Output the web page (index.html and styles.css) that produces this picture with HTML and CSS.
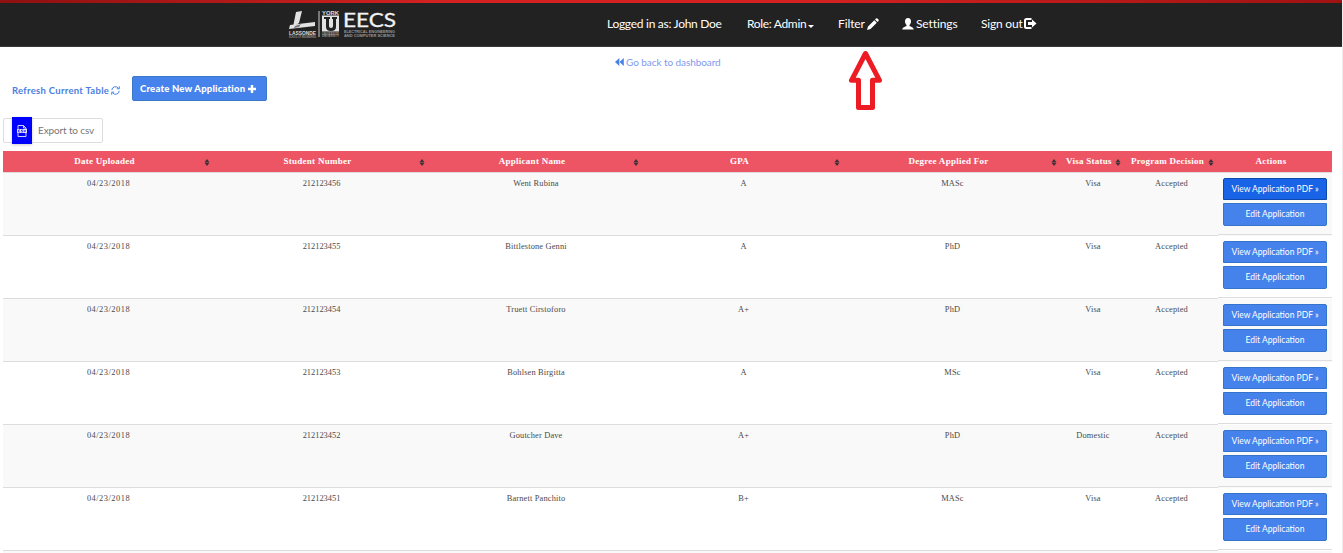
FILE: index.html
```html
<!DOCTYPE html>
<html lang="en">
<head>
<meta charset="utf-8">
<title>Applications</title>
<link rel="stylesheet" href="styles.css">
</head>
<body>
<svg class="defs" width="0" height="0">
  <symbol id="sort" viewBox="0 0 6 7"><path d="M3 0L5.500 3.200H.5zM3 7L5.500 3.800H.5z"/></symbol>
</svg>
<header class="navbar">
  <svg class="logo" width="112" height="32" viewBox="0 0 112 32">
    <path class="l-light" d="M8 3l6-1-3 12-6 4z"/>
    <path class="l-light" d="M2 16l25-3v4L1 20z"/>
    <path class="l-dim" d="M7 17l6-2-2 3-5 1z"/>
    <text class="l-text" x="1" y="26" font-size="6" textLength="27" lengthAdjust="spacingAndGlyphs">LASSONDE</text>
    <text class="l-text l-soft" x="1" y="28.500" font-size="2.6" textLength="27" lengthAdjust="spacingAndGlyphs">SCHOOL OF ENGINEERING</text>
    <rect class="l-dim" x="30" y="2" width="2" height="26"/>
    <text class="l-text" x="34" y="6" font-size="5" textLength="17" lengthAdjust="spacingAndGlyphs">YORK</text>
    <rect class="l-light" x="34" y="6.500" width="17" height="16"/>
    <path class="l-dark" d="M36 8h6v2h-1v7q0 2 2 2t2-2v-7h-1V8h5v2h-1v8q0 4-5 4t-5-4v-8h-2z"/>
    <text class="l-text l-soft" x="34" y="25.500" font-size="3.200" textLength="17" lengthAdjust="spacingAndGlyphs">UNIVERSITÉ</text>
    <text class="l-text l-soft" x="34" y="28.300" font-size="3.200" textLength="17" lengthAdjust="spacingAndGlyphs">UNIVERSITY</text>
    <text class="l-name" x="55" y="18" font-size="20" textLength="53" lengthAdjust="spacingAndGlyphs">EECS</text>
    <text class="l-text l-soft" x="56" y="23.500" font-size="3.800" textLength="51" lengthAdjust="spacingAndGlyphs">ELECTRICAL ENGINEERING</text>
    <text class="l-text l-soft" x="56" y="27.800" font-size="3.800" textLength="51" lengthAdjust="spacingAndGlyphs">AND COMPUTER SCIENCE</text>
  </svg>
  <nav class="menu">
    <a class="user">Logged in as: John Doe</a>
    <a class="role">Role: Admin<i class="caret"></i></a>
    <a class="filter">Filter<svg width="12" height="12" viewBox="0 0 12 12"><path d="M0 12l1-3.500L7.300 2.200l2.500 2.500L3.500 11zM8 1.500l1-1q.7-.7 1.400 0l1.100 1.100q.7.700 0 1.400l-1 1z"/></svg></a>
    <a class="settings"><svg width="12" height="12" viewBox="0 0 12 12"><path d="M6 0c2 0 3 1.300 3 3.300 0 1.600-.6 2.800-1.500 3.700v1c1.500.8 4.200 1.400 4.200 3.500H.3c0-2.100 2.700-2.700 4.200-3.500V7C3.600 6.100 3 4.900 3 3.300 3 1.300 4 0 6 0z"/></svg>Settings</a>
    <a class="signout">Sign out<svg width="13" height="12" viewBox="0 0 13 12"><path d="M7.500 1H2.500Q1 1 1 2.500v6Q1 10 2.500 10h5" fill="none" stroke="#fff" stroke-width="2"/><path d="M4 4h4V1.500l4.500 4L8 9.500V7H4z"/></svg></a>
  </nav>
</header>
<svg class="pointer" width="36" height="62" viewBox="0 0 36 62"><path d="M18.500 4.500L4.500 31.300h7V58.500h14V31.300h7z"/></svg>
<main class="page">
  <div class="back"><svg width="9" height="8" viewBox="0 0 9 8"><path d="M4.300 0v8L0 4zM8.800 0v8L4.500 4z"/></svg><a>Go back to dashboard</a></div>
  <div class="tools">
    <a class="refresh">Refresh Current Table<svg width="9" height="9" viewBox="0 0 9 9"><path d="M.8 4.200A3.700 3.700 0 0 1 7.300 2M8.200 4.800A3.700 3.700 0 0 1 1.700 7M8.300.3v2.500H5.800M.7 8.700V6.200h2.500"/></svg></a>
    <a class="create">Create New Application<svg width="8" height="8" viewBox="0 0 8 8"><path d="M2.800 0h2.400v2.800H8v2.400H5.200V8H2.800V5.200H0V2.800h2.800z"/></svg></a>
  </div>
  <a class="export"><span class="tile"><svg width="10" height="12" viewBox="0 0 10 12"><path class="sheet" d="M1 4V.5h5.500L9 3v1M1 8v3.500h8V8M6.500.5V3H9"/><rect x="0" y="4" width="10" height="4"/><path class="cut" d="M3 5H1.500v2H3M5.800 5H4.500v1h1.200v1H4.300M7 5l.8 2 .8-2"/></svg></span><span class="label">Export to csv</span></a>
  <div class="table" id="table">
    <div class="row head">
      <b><span>Date Uploaded</span><svg><use href="#sort"/></svg></b>
      <b><span>Student Number</span><svg><use href="#sort"/></svg></b>
      <b><span>Applicant Name</span><svg><use href="#sort"/></svg></b>
      <b><span>GPA</span><svg><use href="#sort"/></svg></b>
      <b><span>Degree Applied For</span><svg><use href="#sort"/></svg></b>
      <b><span>Visa Status</span><svg><use href="#sort"/></svg></b>
      <b><span>Program Decision</span><svg><use href="#sort"/></svg></b>
      <b><span>Actions</span></b>
    </div>
  </div>
</main>
<script src="app.js"></script>
</body>
</html>
```
FILE: styles.css
```css
* { box-sizing: border-box; }
body {
  margin: 0;
  height: 553px;
  overflow: hidden;
  background: #fff;
  border-right: 1px solid #eee;
  font-family: Lato, "Open Sans", sans-serif;
}
svg { display: block; flex: none; overflow: visible; }
.defs { position: absolute; }
.navbar {
  display: flex;
  height: 47px;
  margin-right: -1px;
  padding-left: 288px;
  background: linear-gradient(90deg, #8e1010, #d42222 33%, #d42222 60%, #a01212) top / 100% 3px no-repeat #222;
  border-bottom: 1px solid #383838;
}
.logo { margin-top: 9px; }
.l-light { fill: #e2e2e2; }
.l-dim { fill: #777; }
.l-dark { fill: #222; }
.l-text { fill: #ddd; font-family: "Liberation Sans", sans-serif; font-weight: bold; }
.l-soft { fill: #999; }
.l-name { fill: #f2f2f2; stroke: #f2f2f2; stroke-width: .3; font-family: Lato, sans-serif; }
.menu { display: flex; padding: 16px 0 0 207px; color: #fff; font-size: 12px; line-height: 16px; letter-spacing: -.1px; white-space: nowrap; }
.menu a { display: flex; align-items: flex-start; }
.menu svg { margin-top: 2px; fill: #fff; }
.menu .user { width: 140px; letter-spacing: -.28px; }
.menu .role { width: 91px; letter-spacing: -.33px; }
.filter { width: 64px; gap: 2px; }
.settings { width: 79px; gap: 2px; }
.menu .signout { gap: 1px; letter-spacing: -.2px; }
.caret { margin: 9px 0 0 2px; border: 3px solid transparent; border-top-color: #fff; border-bottom: 0; }
.pointer { position: absolute; left: 847px; top: 49px; fill: #fff; stroke: #ed1c24; stroke-width: 5; stroke-linejoin: round; }
.page { padding-left: 3px; }
.back { display: flex; align-items: center; gap: 2px; height: 14px; margin: 8px 0 0 612px; color: #8199ee; font-size: 10px; letter-spacing: -.07px; }
.back svg { fill: #4582ec; }
.tools { display: flex; align-items: flex-start; margin-top: 7px; padding-left: 9px; font-size: 9.5px; font-weight: bold; white-space: nowrap; }
.refresh { display: flex; align-items: center; gap: 2px; width: 120px; height: 28px; color: #4c7ee0; letter-spacing: .28px; }
.refresh svg { fill: none; stroke: #4582ec; }
.create { display: flex; align-items: center; gap: 3px; width: 135px; height: 25px; padding-left: 7px; border: 1px solid #3b78c8; border-radius: 2px; background: #4582ec; color: #fff; font-weight: 900; letter-spacing: .2px; }
.create svg { fill: #fff; }
.export { display: flex; align-items: center; width: 100px; height: 25px; margin-top: 14px; padding-left: 8px; border: 1px solid #ddd; border-radius: 2px; color: #777; font-size: 10px; letter-spacing: -.13px; }
.tile { display: flex; align-items: center; justify-content: center; width: 20px; height: 27px; padding-top: 1px; background: #00f; box-shadow: 0 1px 3px #ccc; }
.tile svg { fill: #ddf; }
.sheet { fill: none; stroke: #ccf; }
.cut { fill: none; stroke: #00f; stroke-width: .6; }
.label { margin: -1px 0 0 6px; }
.table { width: 1329px; margin-top: 8px; font-family: "Liberation Serif", serif; font-size: 8.4px; color: #4a4a4a; }
.row { display: grid; grid-template-columns: 211px 215px 214px 201px 217px 64px 93px 114px; height: 63px; text-align: center; line-height: 10px; letter-spacing: .16px; }
.row > span { padding-top: 6px; border-bottom: 1px solid #ddd; }
.row > span:first-child { letter-spacing: .5px; }
.row > span:nth-child(2) { letter-spacing: 0; }
.row:nth-child(even) { background: #f9f9f9; }
.row:last-child { height: 2px; }
.row:last-child > * { display: none; }
.head { height: 22px; background: #ee5564; border-bottom: 1px solid #ddd; color: #fff; font-size: 9px; letter-spacing: .26px; }
.head b { display: flex; align-items: center; justify-content: center; position: relative; padding: 0 8px 2px 0; white-space: nowrap; }
.head svg { position: absolute; right: 4px; top: 8px; width: 6px; height: 7px; fill: #3d3038; }
.actions { display: flex; flex-direction: column; gap: 3px; height: 62px; padding: 5px 5px 0; border-bottom: 1px solid #ddd; background: inherit; font-family: Lato, sans-serif; font-size: 8.5px; letter-spacing: 0; }
.btn { display: flex; align-items: center; justify-content: center; height: 22px; border: 1px solid #3674cc; border-radius: 2px 2px 0 0; background: #4582ec; color: #fff; white-space: nowrap; }
.btn.edit { height: 23px; padding-bottom: 2px; border-radius: 0 0 2px 2px; }
.btn.active { background: #1863e6; border-color: #1049ae; }
```
FILE: app.js
```javascript
const rows = [
  ["04/23/2018", "212123456", "Went Rubina", "A", "MASc", "Visa", "Accepted"],
  ["04/23/2018", "212123455", "Bittlestone Genni", "A", "PhD", "Visa", "Accepted"],
  ["04/23/2018", "212123454", "Truett Cirstoforo", "A+", "PhD", "Visa", "Accepted"],
  ["04/23/2018", "212123453", "Bohlsen Birgitta", "A", "MSc", "Visa", "Accepted"],
  ["04/23/2018", "212123452", "Goutcher Dave", "A+", "PhD", "Domestic", "Accepted"],
  ["04/23/2018", "212123451", "Barnett Panchito", "B+", "MASc", "Visa", "Accepted"],
  []
];
document.getElementById("table").insertAdjacentHTML("beforeend", rows.map((row, i) =>
  `<div class="row">${row.map(c => `<span>${c}</span>`).join("")}<div class="actions">${row.length ?
  `<a class="btn${i ? "" : " active"}">View Application PDF »</a><a class="btn edit">Edit Application</a>` : ""}</div></div>`).join(""));
```
